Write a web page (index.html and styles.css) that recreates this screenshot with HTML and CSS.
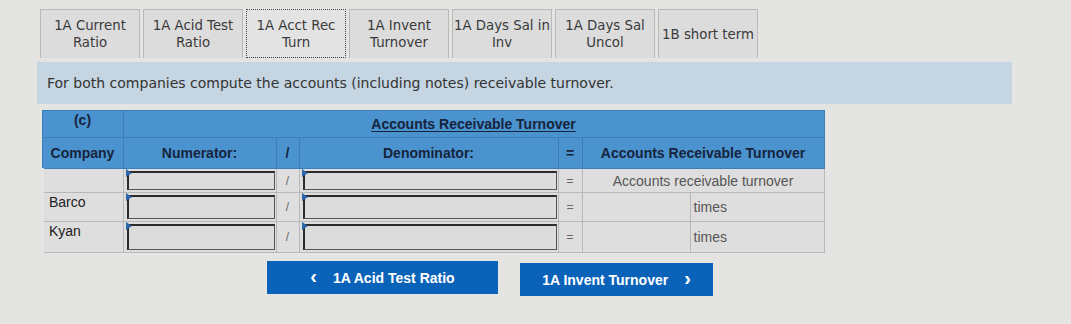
FILE: index.html
```html
<!DOCTYPE html>
<html>
<head>
<meta charset="utf-8">
<link rel="stylesheet" href="styles.css">
</head>
<body>
<div class="page">
  <div class="tabs">
    <div class="tab">1A Current<br>Ratio</div>
    <div class="tab">1A Acid Test<br>Ratio</div>
    <div class="tab active">1A Acct Rec<br>Turn</div>
    <div class="tab">1A Invent<br>Turnover</div>
    <div class="tab">1A Days Sal in<br>Inv</div>
    <div class="tab">1A Days Sal<br>Uncol</div>
    <div class="tab">1B short term</div>
  </div>
  <div class="prompt">For both companies compute the accounts (including notes) receivable turnover.</div>
  <table class="grid">
    <colgroup>
      <col class="c1"><col class="c2"><col class="c3"><col class="c4"><col class="c5"><col class="c6a"><col class="c6b">
    </colgroup>
    <tr class="h1">
      <th class="sec">(c)</th>
      <th colspan="6" class="title"><u>Accounts Receivable Turnover</u></th>
    </tr>
    <tr class="h2">
      <th>Company</th>
      <th>Numerator:</th>
      <th>/</th>
      <th>Denominator:</th>
      <th>=</th>
      <th colspan="2">Accounts Receivable Turnover</th>
    </tr>
    <tr class="r r1">
      <td class="name"></td>
      <td class="in"><div class="box"></div></td>
      <td class="op">/</td>
      <td class="in"><div class="box"></div></td>
      <td class="op">=</td>
      <td colspan="2" class="lbl">Accounts receivable turnover</td>
    </tr>
    <tr class="r r2">
      <td class="name">Barco</td>
      <td class="in"><div class="box"></div></td>
      <td class="op">/</td>
      <td class="in"><div class="box"></div></td>
      <td class="op">=</td>
      <td class="ans"></td>
      <td class="unit">times</td>
    </tr>
    <tr class="r r3">
      <td class="name">Kyan</td>
      <td class="in"><div class="box"></div></td>
      <td class="op">/</td>
      <td class="in"><div class="box"></div></td>
      <td class="op">=</td>
      <td class="ans"></td>
      <td class="unit">times</td>
    </tr>
  </table>
  <div class="nav">
    <button class="btn prev"><span class="chev">&lsaquo;</span>1A Acid Test Ratio</button>
    <button class="btn next">1A Invent Turnover<span class="chev">&rsaquo;</span></button>
  </div>
</div>
</body>
</html>
```
FILE: styles.css
```css
html, body {
  margin: 0;
  padding: 0;
}
body {
  background: #e4e4e3;
  width: 1071px;
  height: 324px;
  overflow: hidden;
}
.page {
  padding: 9px 0 0 37px;
}
.tabs {
  display: flex;
  gap: 3px;
  padding-left: 3px;
  height: 49px;
}
.tab {
  width: 100px;
  box-sizing: border-box;
  background: #dcdcdc;
  border: 1px solid #b9b9b9;
  border-bottom: none;
  display: flex;
  align-items: center;
  justify-content: center;
  text-align: center;
  font-family: "DejaVu Sans", sans-serif;
  font-size: 13.3px;
  line-height: 17px;
  color: #3a3a3a;
}
.tab.active {
  background: #e3e3e3;
  border: 1px dotted #444;
}
.prompt {
  margin-top: 4px;
  width: 975px;
  height: 42px;
  box-sizing: border-box;
  background: #c5d5e1;
  padding: 0 10px;
  display: flex;
  align-items: center;
  font-family: "DejaVu Sans", sans-serif;
  font-size: 14px;
  color: #333;
}
.grid {
  margin: 6px 0 0 3px;
  border-collapse: collapse;
  font-family: "Liberation Sans", Arial, sans-serif;
  font-size: 14px;
  line-height: 16px;
  table-layout: fixed;
  width: 782px;
}
.c1 { width: 81px; }
.c2 { width: 153px; }
.c3 { width: 23px; }
.c4 { width: 259px; }
.c5 { width: 24px; }
.c6a { width: 108px; }
.c6b { width: 134px; }
.grid th {
  background: #4a93cf;
  color: #16243c;
  font-weight: bold;
  padding: 0;
  border: 1px solid #3b7fb9;
}
.h1 { height: 27px; }
.h2 { height: 31px; }
.r1 { height: 24px; }
.r2 { height: 29px; }
.r3 { height: 31px; }
.h1 .sec { vertical-align: top; padding-top: 1px; }
.h1 .title { text-align: center; }
.h1 .title u { text-underline-offset: 2px; }
.grid td {
  background: #dedede;
  border: 1px solid #b8b8b8;
  padding: 0;
}
.grid td.name {
  padding: 1px 0 0 5px;
  vertical-align: top;
  color: #222;
  border-left: 4px solid #e4e4e3;
}
.grid td.in {
  padding: 2px 1px 2px 3px;
  position: relative;
}
.box {
  box-sizing: border-box;
  border-top: 2px solid #2b2b2b;
  border-left: 2px solid #2b2b2b;
  border-right: 1px solid #555;
  border-bottom: 1px solid #555;
  background: #dcdcdc;
}
.r1 .box { height: 19px; }
.r2 .box { height: 24px; }
.r3 .box { height: 26px; }
.grid td.in::before {
  content: "";
  position: absolute;
  left: 2px;
  top: 0;
  border-top: 4px solid transparent;
  border-bottom: 4px solid transparent;
  border-left: 6px solid #2a66a8;
}
.grid td.op {
  text-align: center;
  color: #666;
  font-size: 12px;
}
.grid td.lbl {
  text-align: center;
  color: #555;
}
.grid td.unit {
  color: #555;
  padding-left: 3px;
}
.nav {
  display: flex;
  gap: 22px;
  margin: 8px 0 0 230px;
}
.btn {
  height: 33px;
  border: none;
  background: #0b63b9;
  color: #fff;
  font-family: "Liberation Sans", Arial, sans-serif;
  font-weight: bold;
  font-size: 14px;
  display: flex;
  align-items: center;
  justify-content: center;
  padding: 0;
}
.btn.prev { width: 231px; }
.btn.next { width: 193px; margin-top: 2px; }
.chev {
  font-size: 20px;
  line-height: 1;
  margin-top: -3px;
}
.prev .chev { margin-right: 16px; }
.next .chev { margin-left: 16px; }
```
